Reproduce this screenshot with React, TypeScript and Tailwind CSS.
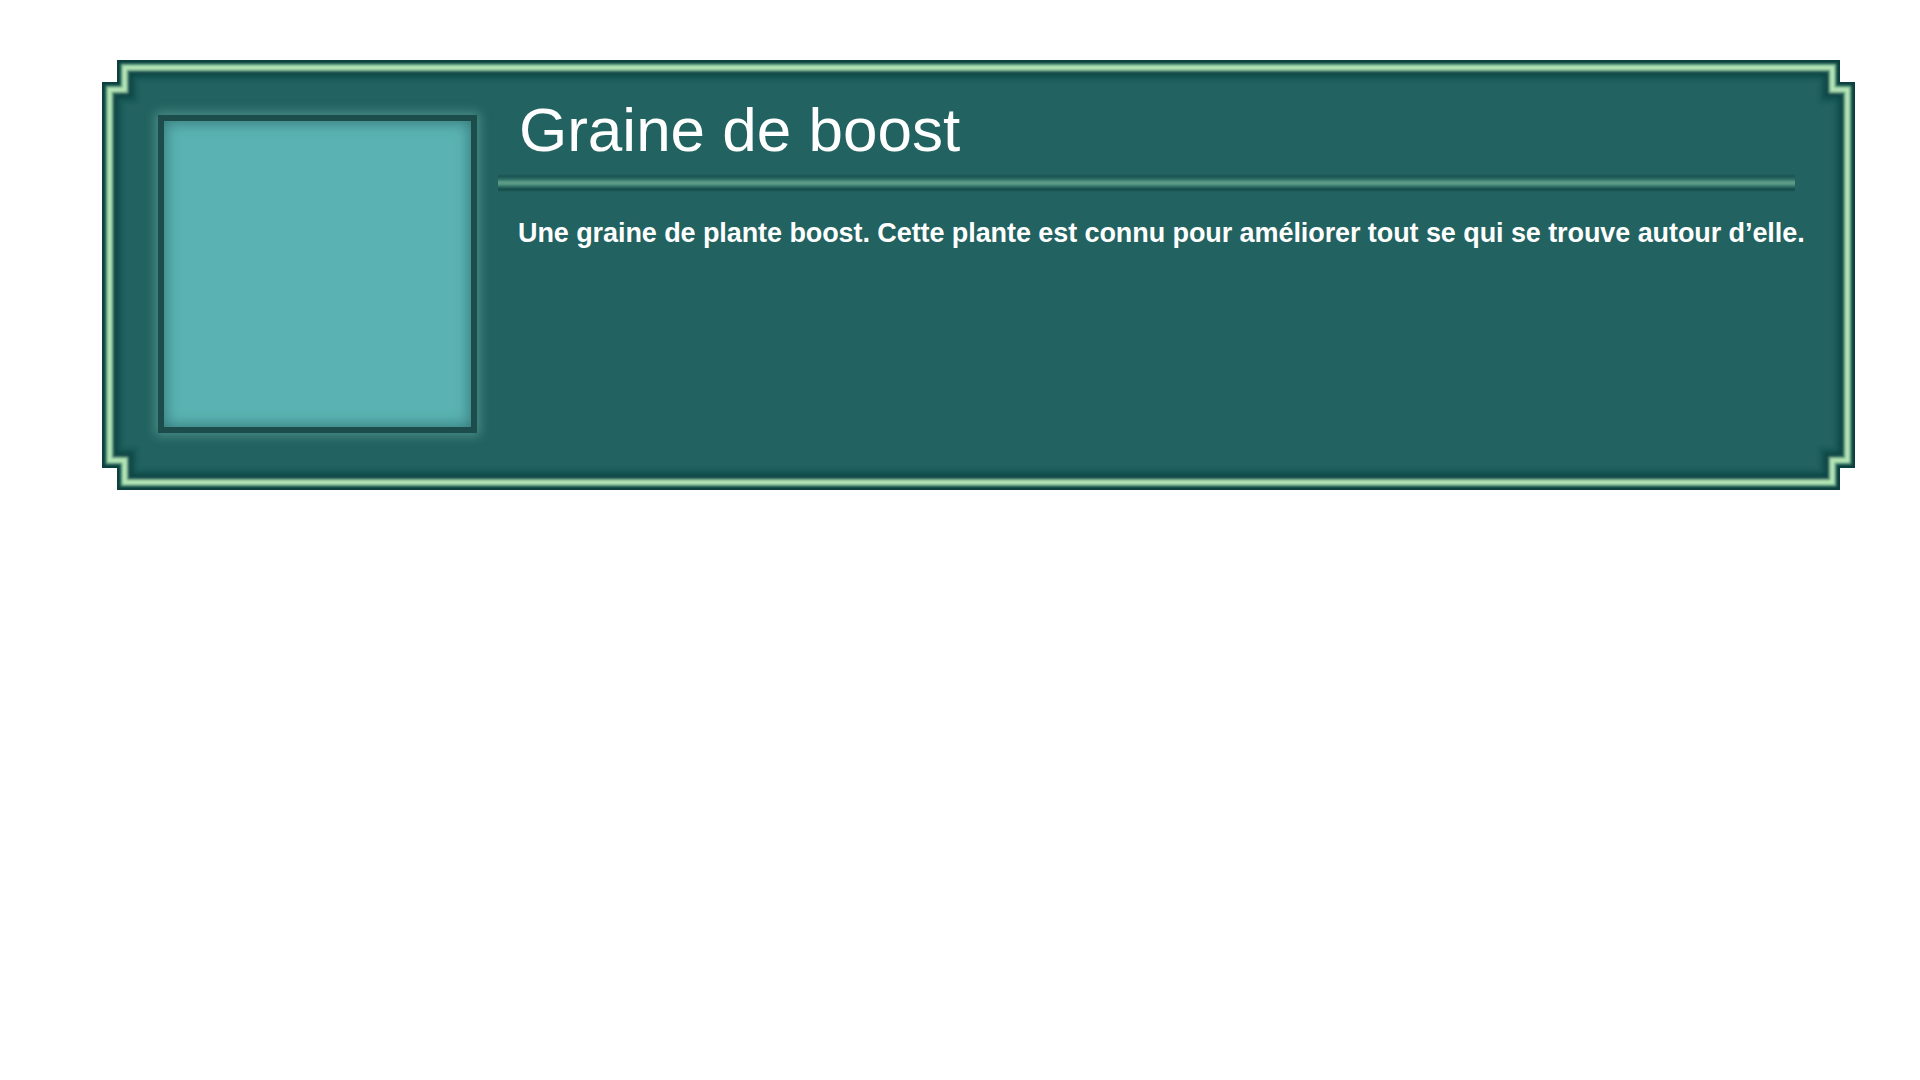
import React from "react";

const W = 1753;
const H = 430;
const NX = 15;
const NY = 22;

function poly(d: number): string {
  const pts: [number, number][] = [
    [NX + d, d],
    [W - NX - d, d],
    [W - NX - d, NY + d],
    [W - d, NY + d],
    [W - d, H - NY - d],
    [W - NX - d, H - NY - d],
    [W - NX - d, H - d],
    [NX + d, H - d],
    [NX + d, H - NY - d],
    [d, H - NY - d],
    [d, NY + d],
    [NX + d, NY + d],
  ];
  return pts.map((p) => p.join(",")).join(" ");
}

const layers: [number, string][] = [
  [0, "#0c3f3d"],
  [3, "#2c6b60"],
  [4.5, "#7fbf98"],
  [6, "#b8e8b8"],
  [8.5, "#a6daae"],
  [10, "#4e8c78"],
  [11.5, "#134b48"],
  [13, "#0f4644"],
  [16, "#185654"],
  [19, "#1e5e5c"],
  [22, "#216260"],
];

function Frame() {
  return (
    <svg
      className="absolute inset-0"
      width={W}
      height={H}
      viewBox={`0 0 ${W} ${H}`}
    >
      <defs>
        <filter id="soft" x="-1%" y="-5%" width="102%" height="110%">
          <feGaussianBlur stdDeviation="0.9" />
        </filter>
        <filter id="soft2" x="-1%" y="-5%" width="102%" height="110%">
          <feGaussianBlur stdDeviation="2" />
        </filter>
      </defs>
      <polygon points={poly(0)} fill="#0c3f3d" />
      <g filter="url(#soft)">
        {layers.slice(1, 8).map(([d, c]) => (
          <polygon key={d} points={poly(d)} fill={c} />
        ))}
      </g>
      <g filter="url(#soft2)">
        {layers.slice(8).map(([d, c]) => (
          <polygon key={d} points={poly(d)} fill={c} />
        ))}
      </g>
    </svg>
  );
}

export default function App() {
  return (
    <div className="min-h-screen w-full bg-white pt-[60px] pl-[102px]">
      <div className="relative w-[1753px] h-[430px]">
        <Frame />
        <div className="relative flex pl-[56px] pt-[55px]">
          <div className="w-[319px] h-[318px] shrink-0 border-[6px] border-[#1c4d4c] bg-[#5ab3b2] shadow-[0_0_10px_3px_rgba(120,190,180,0.45),inset_0_0_14px_2px_rgba(25,80,78,0.55)]" />
          <div className="ml-[21px] flex-1 flex flex-col">
            <div
              className="pl-[21px] -mt-[16px] text-[62px] leading-none text-white"
              style={{ fontFamily: '"Liberation Sans", Arial, sans-serif' }}
            >
              Graine de boost
            </div>
            <div className="mt-[13px] w-[1297px] h-[18px] bg-[linear-gradient(to_bottom,rgba(22,80,78,0)_0%,#1a5452_12%,#2c6c64_28%,#5c9c87_45%,#5a9a85_55%,#2f6f66_70%,#154a48_85%,rgba(22,80,78,0)_100%)]" />
            <div
              className="pl-[20px] mt-[28px] text-[27px] tracking-[-0.08px] leading-none font-bold text-white whitespace-nowrap"
              style={{
                fontFamily: '"Liberation Sans", Arial, sans-serif',
              }}
            >
              Une graine de plante boost. Cette plante est connu pour améliorer tout se qui se trouve autour d’elle.
            </div>
          </div>
        </div>
      </div>
    </div>
  );
}
